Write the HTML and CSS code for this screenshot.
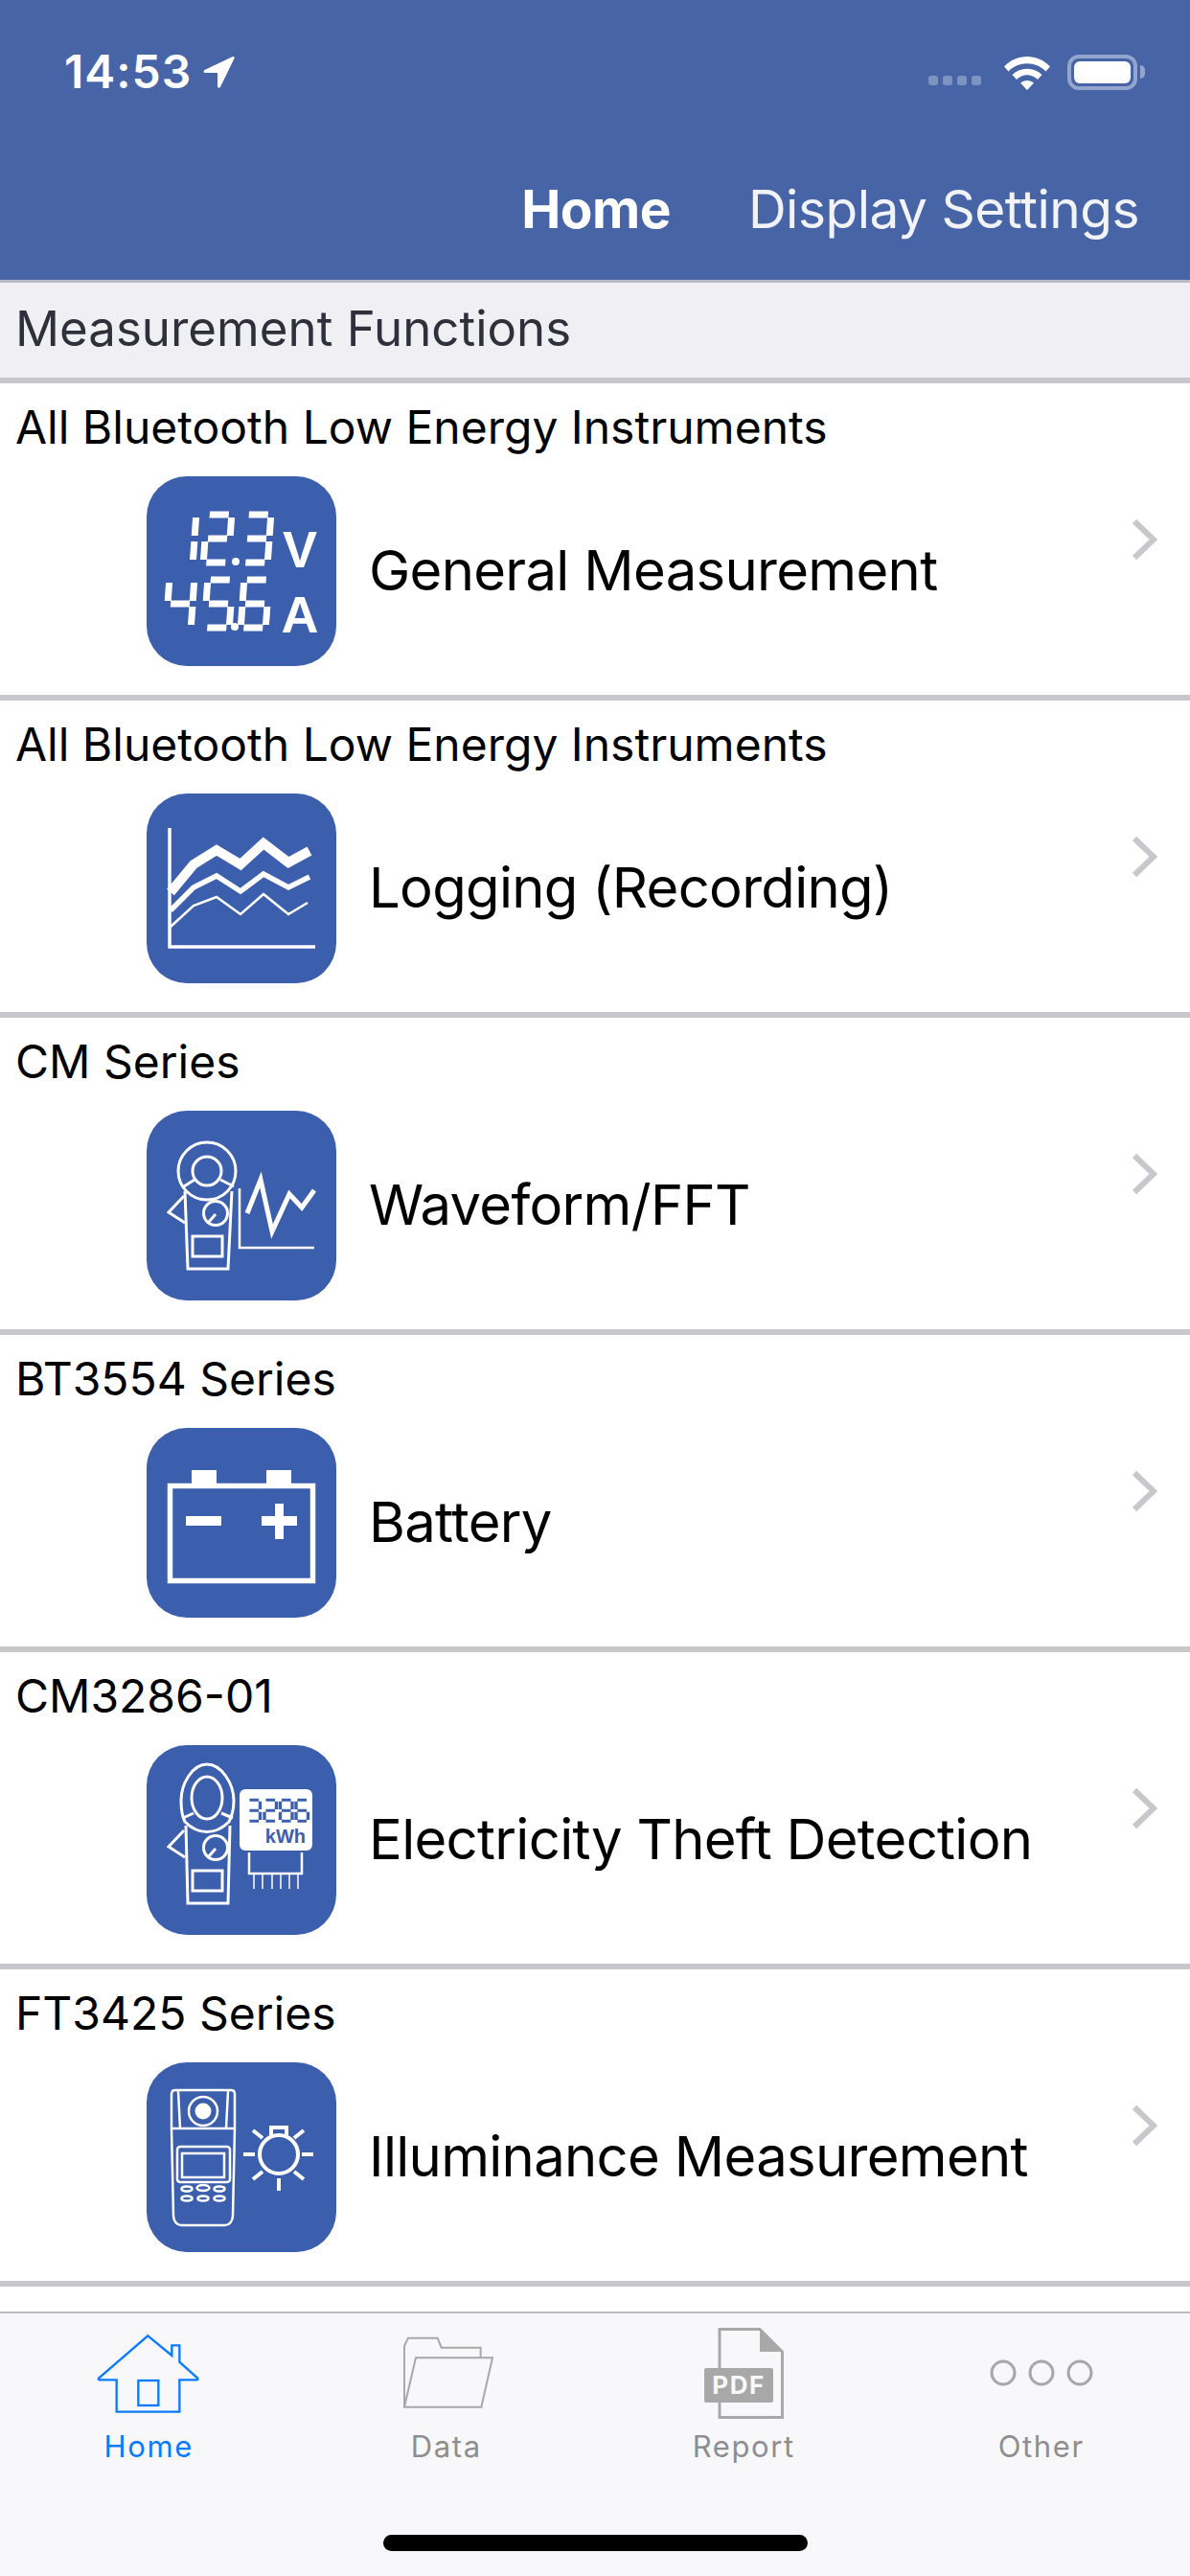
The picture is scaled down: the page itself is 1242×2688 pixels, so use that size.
FILE: index.html
```html
<!DOCTYPE html>
<html>
<head>
    <meta charset="utf-8">
    <title>Home</title>
    <link rel="stylesheet" href="styles.css">
</head>
<body>
<div id="app">
    <header class="topbar">
        <div class="status">
            <div class="status-left">
                <span class="time">14:53</span>
                <svg class="arrow" width="33" height="34" viewBox="0 0 33 34"><path d="M31 1 1.500 15c-1.500.8-1 3 .6 3H15V32c0 1.800 2.200 2.200 3 .7L32.500 3c.6-1.200-.4-2.500-1.500-2z" fill="#fff"/></svg>
            </div>
            <div class="status-right">
                <div class="signal"><i></i><i></i><i></i><i></i></div>
                <svg class="wifi" width="50" height="37" viewBox="0 0 50 37">
                    <path d="M1 12.500C14 -1.500 36 -1.500 49 12.500L44.500 17.500C34 6.500 16 6.500 5.500 17.500z" fill="#fff"/>
                    <path d="M9.500 21C18 12.500 32 12.500 40.500 21L36 26C29.500 19.500 20.500 19.500 14 26z" fill="#fff"/>
                    <path d="M18 29.500C22 26 28 26 32 29.500L25 37z" fill="#fff"/>
                </svg>
                <div class="battery"><div class="battery-fill"></div></div>
                <div class="battery-nub"></div>
            </div>
        </div>
        <nav class="nav">
            <span class="nav-item active">Home</span>
            <span class="nav-item">Display Settings</span>
        </nav>
    </header>

    <div class="section-title">Measurement Functions</div>

    <main class="list">
        <a class="row">
            <div class="row-body">
                <div class="series">All Bluetooth Low Energy Instruments</div>
                <div class="func">
                    <svg class="func-icon" viewBox="0 0 198 198" role="img" aria-label="12.3 V 45.6 A">
                        <defs>
                            <g id="d1" class="seg"><path d="M26 6V25M26 31V50"/></g>
                            <g id="d2" class="seg"><path d="M3 3H23M26 6V25M3 28H23M0 31V50M3 53H23"/></g>
                            <g id="d3" class="seg"><path d="M3 3H23M26 6V25M3 28H23M26 31V50M3 53H23"/></g>
                            <g id="d4" class="seg"><path d="M0 6V25M3 28H23M26 6V25M26 31V50"/></g>
                            <g id="d5" class="seg"><path d="M3 3H23M0 6V25M3 28H23M26 31V50M3 53H23"/></g>
                            <g id="d6" class="seg"><path d="M3 3H23M0 6V25M3 28H23M0 31V50M26 31V50M3 53H23"/></g>
                            <g id="d8" class="seg"><path d="M3 3H23M0 6V25M26 6V25M3 28H23M0 31V50M26 31V50M3 53H23"/></g>
                        </defs>
                        <rect class="tile" width="198" height="198" rx="42"/>
                        <use href="#d1" transform="translate(26 37) skewX(-4)"/>
                        <use href="#d2" transform="translate(63 37) skewX(-4)"/>
                        <circle cx="93" cy="89" r="4" fill="#fff"/>
                        <use href="#d3" transform="translate(104 37) skewX(-4)"/>
                        <use href="#d4" transform="translate(24 105) skewX(-4)"/>
                        <use href="#d5" transform="translate(64 105) skewX(-4)"/>
                        <circle cx="92" cy="157" r="4" fill="#fff"/>
                        <use href="#d6" transform="translate(102 105) skewX(-4)"/>
                        <text class="unit" x="160" y="95" text-anchor="middle">V</text>
                        <text class="unit" x="160" y="163" text-anchor="middle">A</text>
                    </svg>
                    <span class="func-name">General Measurement</span>
                </div>
            </div>
            <svg class="chevron" width="27" height="44" viewBox="0 0 27 44"><path d="M3 3 23 22 3 41"/></svg>
        </a>

        <a class="row">
            <div class="row-body">
                <div class="series">All Bluetooth Low Energy Instruments</div>
                <div class="func">
                    <svg class="func-icon" viewBox="0 0 198 198">
                        <rect class="tile" width="198" height="198" rx="42"/>
                        <path class="ln" stroke-width="3.500" d="M24 36V160H176"/>
                        <path class="ln" stroke-width="10" d="M25 103 49 74 73 59 98 74 122 52 148 72 170 60"/>
                        <path class="ln" stroke-width="5.500" d="M25 122 49 98 73 86 98 102 122 84 148 98 170 87"/>
                        <path class="ln" stroke-width="2.500" d="M25 139 49 117 73 108 98 126 122 105 148 126 168 114"/>
                    </svg>
                    <span class="func-name">Logging (Recording)</span>
                </div>
            </div>
            <svg class="chevron" width="27" height="44" viewBox="0 0 27 44"><path d="M3 3 23 22 3 41"/></svg>
        </a>

        <a class="row">
            <div class="row-body">
                <div class="series">CM Series</div>
                <div class="func">
                    <svg class="func-icon" viewBox="0 0 198 198">
                        <rect class="tile" width="198" height="198" rx="42"/>
                        <g class="ln" stroke-width="3">
                            <circle cx="63" cy="63" r="30"/>
                            <circle cx="63" cy="63" r="15"/>
                            <path d="M39 79 50 72M77 72 91 79"/>
                            <path d="M40 84 43 165H85L89 84"/>
                            <path d="M39 89 23 106 40 117"/>
                            <circle cx="72" cy="107" r="12.500"/>
                            <path d="M65 116 72 108"/>
                            <rect x="48" y="131" width="31" height="21"/>
                            <path stroke-width="2.500" d="M97 81V143H175"/>
                            <path stroke-width="5" d="M105 107 119 72 131 126 149 87 162 101 175 83"/>
                        </g>
                    </svg>
                    <span class="func-name">Waveform/FFT</span>
                </div>
            </div>
            <svg class="chevron" width="27" height="44" viewBox="0 0 27 44"><path d="M3 3 23 22 3 41"/></svg>
        </a>

        <a class="row">
            <div class="row-body">
                <div class="series">BT3554 Series</div>
                <div class="func">
                    <svg class="func-icon" viewBox="0 0 198 198">
                        <rect class="tile" width="198" height="198" rx="42"/>
                        <path class="ln" stroke-width="5.500" d="M24.500 60.500H173.500V159.500H24.500z"/>
                        <path fill="#fff" d="M47 44H73V58H47zM125 44H151V58H125zM41 92H78V102H41zM120 92H134V79H143V92H157V102H143V116H134V102H120z"/>
                    </svg>
                    <span class="func-name">Battery</span>
                </div>
            </div>
            <svg class="chevron" width="27" height="44" viewBox="0 0 27 44"><path d="M3 3 23 22 3 41"/></svg>
        </a>

        <a class="row">
            <div class="row-body">
                <div class="series">CM3286-01</div>
                <div class="func">
                    <svg class="func-icon" viewBox="0 0 198 198">
                        <rect class="tile" width="198" height="198" rx="42"/>
                        <g class="ln" stroke-width="3">
                            <path d="M63 20C78 20 91 40 91 58 91 70 88 76 86 80 72 94 54 94 40 80 38 76 36 70 36 58 36 40 48 20 63 20z"/>
                            <ellipse cx="63" cy="55" rx="16" ry="22"/>
                            <path d="M38 76 49 71M78 71 90 76"/>
                            <path d="M41 84 43 165H85L87 84"/>
                            <path d="M39 89 23 106 40 117"/>
                            <circle cx="72" cy="107" r="12.500"/>
                            <path d="M65 116 72 108"/>
                            <rect x="48" y="131" width="31" height="21"/>
                        </g>
                        <rect x="97" y="46" width="76" height="64" rx="6" fill="#fff"/>
                        <g class="meter-digits">
                            <use href="#d3" transform="translate(106 56) scale(.48 .44)"/>
                            <use href="#d2" transform="translate(123 56) scale(.48 .44)"/>
                            <use href="#d8" transform="translate(139.500 56) scale(.48 .44)"/>
                            <use href="#d6" transform="translate(156 56) scale(.48 .44)"/>
                        </g>
                        <text class="kwh" x="166" y="102" text-anchor="end">kWh</text>
                        <g class="ln" stroke-width="2.500"><path d="M107 112V134H162V112"/></g>
                        <g class="ln" stroke-width="1.500"><path d="M112 134V150M121 134V150M131 134V150M140 134V150M149 134V150M158 134V150"/></g>
                    </svg>
                    <span class="func-name">Electricity Theft Detection</span>
                </div>
            </div>
            <svg class="chevron" width="27" height="44" viewBox="0 0 27 44"><path d="M3 3 23 22 3 41"/></svg>
        </a>

        <a class="row">
            <div class="row-body">
                <div class="series">FT3425 Series</div>
                <div class="func">
                    <svg class="func-icon" viewBox="0 0 198 198">
                        <rect class="tile" width="198" height="198" rx="42"/>
                        <g class="ln" stroke-width="2.500">
                            <path d="M30 29H88C91 29 92 31 92 33V69L90 160C90 166 86 170 82 170H36C32 170 28 166 28 160L26 69V33C26 31 27 29 30 29z"/>
                            <path d="M26 69H92M33 30 35 69M85 30 83 69"/>
                            <circle cx="59" cy="51" r="15"/>
                            <rect x="32" y="88" width="55" height="37" rx="3"/>
                            <rect x="37" y="95" width="44" height="25"/>
                            <ellipse cx="42" cy="132" rx="5.500" ry="2.500"/>
                            <ellipse cx="59" cy="131" rx="6.500" ry="3"/>
                            <ellipse cx="76" cy="132" rx="5.500" ry="2.500"/>
                            <ellipse cx="42" cy="142" rx="5.500" ry="2.500"/>
                            <ellipse cx="59" cy="142" rx="5.500" ry="2.500"/>
                            <ellipse cx="76" cy="142" rx="5.500" ry="2.500"/>
                        </g>
                        <circle cx="59" cy="51" r="8.500" fill="#fff"/>
                        <g class="ln" stroke-width="4">
                            <circle cx="138" cy="96" r="20"/>
                            <path d="M130 76V68H146V76"/>
                            <path d="M101 96H113M162 96H174M138 121V134M111 71 121 79M164 71 154 79M111 122 121 114M164 122 154 114"/>
                        </g>
                    </svg>
                    <span class="func-name">Illuminance Measurement</span>
                </div>
            </div>
            <svg class="chevron" width="27" height="44" viewBox="0 0 27 44"><path d="M3 3 23 22 3 41"/></svg>
        </a>
    </main>

    <footer class="tabbar">
        <div class="tabs">
            <div class="tab active">
                <div class="tab-icon">
                    <svg class="home-icon" width="110" height="85" viewBox="120 40 330 255">
                        <path d="M283 50 358 112V80H382V132L438 182C441 185 440 188 436 188H382V288H185V188H132C128 188 127 185 130 182z"/>
                        <rect x="253" y="190" width="63" height="78"/>
                    </svg>
                </div>
                <span class="tab-label">Home</span>
            </div>
            <div class="tab">
                <div class="tab-icon">
                    <svg class="folder-icon" width="97" height="76" viewBox="1075 55 291 228">
                        <path d="M1084 278V85L1096 60H1188L1200 90H1323V122"/>
                        <path d="M1120 122H1360L1325 276H1084z"/>
                    </svg>
                </div>
                <span class="tab-label">Data</span>
            </div>
            <div class="tab">
                <div class="tab-icon">
                    <svg width="83" height="95" viewBox="0 0 83 95">
                        <path d="M16 1.500H58L81.500 25V93.500H16z"/>
                        <path class="solid" d="M58 1.500 81.500 25H58z"/>
                        <rect class="solid" x="0" y="42" width="72" height="36" rx="2"/>
                        <text class="pdf-text" x="36" y="69" text-anchor="middle">PDF</text>
                    </svg>
                </div>
                <span class="tab-label">Report</span>
            </div>
            <div class="tab">
                <div class="tab-icon">
                    <svg width="108" height="28" viewBox="0 0 108 28">
                        <circle cx="14" cy="14" r="12"/>
                        <circle cx="54" cy="14" r="12"/>
                        <circle cx="94" cy="14" r="12"/>
                    </svg>
                </div>
                <span class="tab-label">Other</span>
            </div>
        </div>
        <div class="home-indicator"></div>
    </footer>
</div>
</body>
</html>
```

FILE: styles.css
```css
html, body {
    margin: 0;
    padding: 0;
}

body {
    font-family: Inter, "Noto Sans", sans-serif;
    background-color: #ffffff;
    color: #000000;
}

#app {
    width: 1242px;
    height: 2688px;
    display: flex;
    flex-direction: column;
    overflow: hidden;
}

/* top bar */
.topbar {
    height: 292px;
    background-color: #4664a6;
    color: #ffffff;
    border-bottom: 3px solid #b9bcc5;
}

.status {
    height: 150px;
    display: flex;
    align-items: center;
    justify-content: space-between;
    padding: 0 47px 0 67px;
}

.status-left {
    display: flex;
    align-items: center;
    gap: 12px;
}

.time {
    font-size: 48px;
    font-weight: 600;
    line-height: 50px;
    letter-spacing: 1px;
}

.status-right {
    display: flex;
    align-items: center;
}

.signal {
    display: flex;
    gap: 5px;
    margin: 18px 23px 0 0;
}

.signal i {
    display: block;
    width: 10px;
    height: 10px;
    border-radius: 3px;
    background-color: #7e93c0;
}

.wifi {
    margin-right: 17px;
}

.battery {
    width: 73px;
    height: 37px;
    box-sizing: border-box;
    padding: 3px;
    border: 4px solid #94a6cd;
    border-radius: 12px;
}

.battery-fill {
    height: 100%;
    background-color: #ffffff;
    border-radius: 6px;
}

.battery-nub {
    width: 5px;
    height: 14px;
    margin-left: 3px;
    background-color: #94a6cd;
    border-radius: 0 7px 7px 0;
}

.nav {
    height: 136px;
    display: flex;
    align-items: center;
    justify-content: flex-end;
    gap: 81px;
    padding-right: 53px;
}

.nav-item {
    font-size: 55px;
    color: #f1f3f9;
    letter-spacing: -0.5px;
}

.nav-item.active {
    font-weight: 700;
    color: #ffffff;
}

/* list */
.section-title {
    height: 99px;
    line-height: 96px;
    padding-left: 16px;
    font-size: 51px;
    color: #30303c;
    background-color: #efeff4;
    border-bottom: 6px solid #c8c7cc;
}

.list {
    flex: 1;
    overflow: hidden;
}

.row {
    height: 325px;
    display: flex;
    align-items: center;
    padding: 0 34px 0 16px;
    border-bottom: 6px solid #c8c7cc;
}

.row-body {
    flex: 1;
}

.series {
    font-size: 48px;
    line-height: 60px;
    margin-top: -14px;
}

.func {
    display: flex;
    align-items: center;
    gap: 34px;
    margin: 21px 0 0 137px;
}

.func-icon {
    width: 198px;
    height: 198px;
    flex: none;
    color: #ffffff;
}

.func-name {
    font-size: 58px;
    letter-spacing: -0.7px;
    margin-top: -2px;
}

.chevron {
    flex: none;
}

.chevron path {
    fill: none;
    stroke: #c7c7cc;
    stroke-width: 6;
}

.tile {
    fill: #3b5ead;
}

.ln {
    fill: none;
    stroke: #ffffff;
}

.seg {
    fill: none;
    stroke: currentColor;
    stroke-width: 7;
}

.meter-digits {
    color: #3b5ead;
}

.unit {
    font-family: "Liberation Sans", sans-serif;
    font-size: 54px;
    font-weight: 700;
    fill: #ffffff;
}

.kwh {
    font-family: "Liberation Sans", sans-serif;
    font-size: 20px;
    font-weight: 700;
    fill: #3b5ead;
}

/* tab bar */
.tabbar {
    height: 276px;
    box-sizing: border-box;
    background-color: #f8f8fa;
    border-top: 2px solid #bcbcc0;
    display: flex;
    flex-direction: column;
}

.tabs {
    display: flex;
    padding-top: 10px;
}

.tab {
    flex: 1;
    display: flex;
    flex-direction: column;
    align-items: center;
    color: #8e8e8e;
}

.tab.active {
    color: #0a7aff;
}

.tab-icon {
    height: 104px;
    display: flex;
    align-items: center;
    justify-content: center;
}

.tab-icon path,
.tab-icon rect,
.tab-icon circle {
    fill: none;
    stroke: #a8a8a8;
    stroke-width: 3;
}

.tab-icon .home-icon path,
.tab-icon .home-icon rect {
    stroke-width: 7;
}

.tab-icon .folder-icon {
    margin-left: 3px;
}

.tab-icon .folder-icon path {
    stroke-width: 6;
}

.tab.active .tab-icon path,
.tab.active .tab-icon rect {
    stroke: #0a7aff;
}

.tab-icon .solid {
    fill: #a8a8a8;
    stroke: none;
}

.pdf-text {
    font-size: 26px;
    font-weight: 700;
    letter-spacing: 1.500px;
    fill: #f8f8fa;
}

.tab-label {
    font-size: 31px;
    line-height: 40px;
    margin-top: 5px;
    letter-spacing: 1.600px;
}

.home-indicator {
    width: 443px;
    height: 17px;
    margin: auto auto 26px;
    background-color: #000000;
    border-radius: 9px;
}
```
